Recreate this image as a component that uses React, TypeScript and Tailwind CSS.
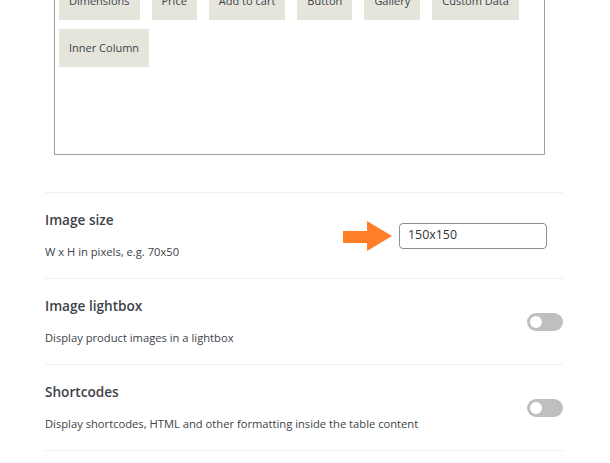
import React from "react";

const tagsRow = ["Dimensions", "Price", "Add to cart", "Button", "Gallery", "Custom Data", "Inner Column"];

function Tag({ label }: { label: string }) {
  return (
    <div className="h-[38px] px-[10px] flex items-center bg-[#e5e5dc] text-[11px] text-[#3c434a] whitespace-nowrap">
      {label}
    </div>
  );
}

function Toggle() {
  return (
    <div className="w-[36px] h-[18px] rounded-full bg-[#bfbfbf] flex items-center pl-[3px]">
      <div className="w-[12px] h-[12px] rounded-full bg-white" />
    </div>
  );
}

function Row({ title, desc, right }: { title: string; desc: string; right: React.ReactNode }) {
  return (
    <div className="flex items-center justify-between border-b border-[#f0f0f0]">
      <div className="pt-[17px] pb-[18px]">
        <div className="text-[13.6px] leading-[20px] font-semibold text-[#3c434a]">{title}</div>
        <div className="mt-[14px] text-[11.2px] leading-[16px] text-[#3c434a]">{desc}</div>
      </div>
      {right}
    </div>
  );
}

export default function App() {
  return (
    <div
      className="w-[610px] h-[463px] bg-white overflow-hidden"
      style={{ fontFamily: '"Open Sans", "Noto Sans", sans-serif' }}
    >
      <div className="ml-[45px] w-[518px]">
        <div className="ml-[9px] w-[491px] h-[191px] mt-[-36px] border border-[#a0a0a0] pt-[17px] pl-[4px] flex flex-wrap content-start gap-x-[12px] gap-y-[9px]">
          {tagsRow.map((t) => (
            <Tag key={t} label={t} />
          ))}
        </div>
        <div className="mt-[37px] border-t border-[#f0f0f0]">
          <Row
            title="Image size"
            desc="W x H in pixels, e.g. 70x50"
            right={
              <div className="flex items-center gap-[7px] mr-[16px]">
                <svg width="49" height="30" viewBox="0 0 49 30">
                  <polygon points="0,10 24,10 24,0 49,15 24,30 24,22 0,22" fill="#ff7f27" />
                </svg>
                <div className="w-[148px] h-[26px] border border-[#8c8f94] rounded-[4px] flex items-center pl-[8px] text-[12.4px] text-[#2c3338]">
                  150x150
                </div>
              </div>
            }
          />
          <Row title="Image lightbox" desc="Display product images in a lightbox" right={<Toggle />} />
          <Row
            title="Shortcodes"
            desc="Display shortcodes, HTML and other formatting inside the table content"
            right={<Toggle />}
          />
        </div>
      </div>
    </div>
  );
}
